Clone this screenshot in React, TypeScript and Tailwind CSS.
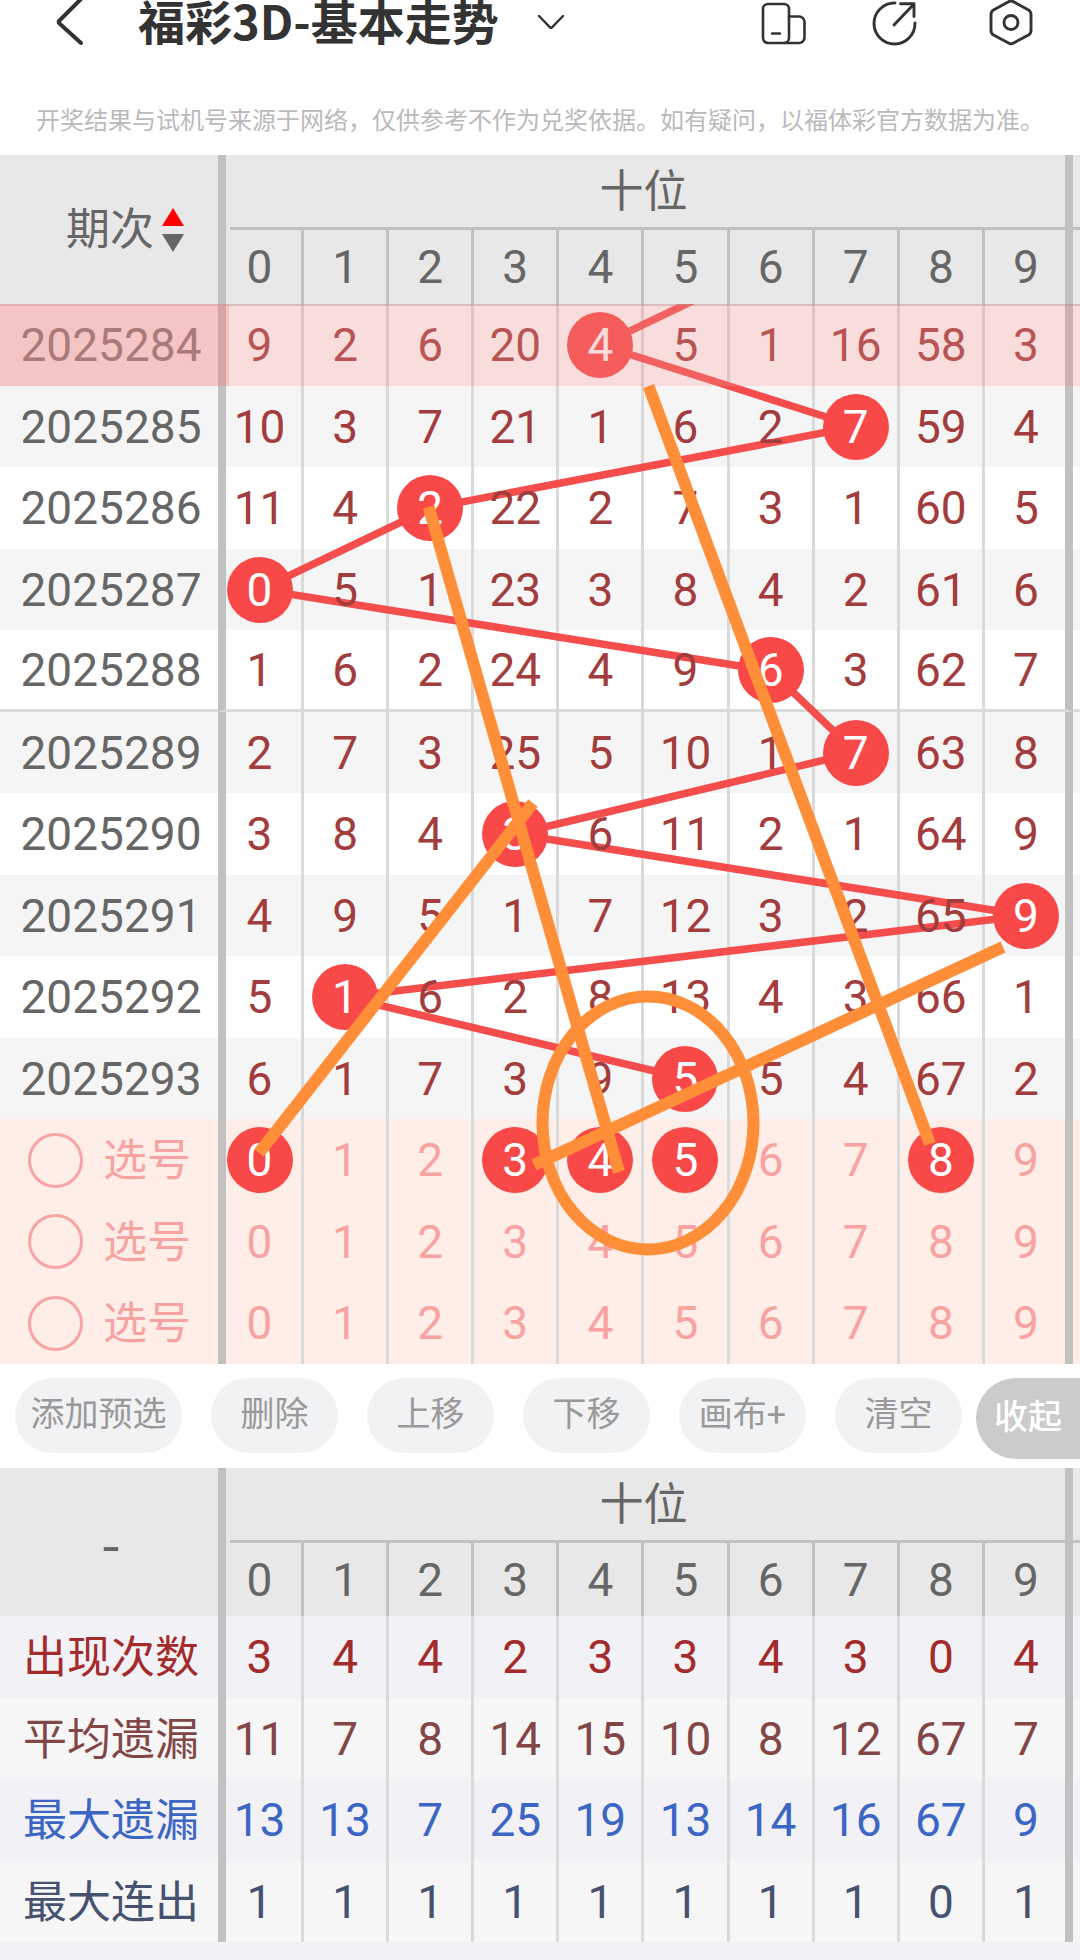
import { useState } from "react";

const DIGITS = [0, 1, 2, 3, 4, 5, 6, 7, 8, 9];

type Draw = { issue: string; values: number[]; hit: number };

const DRAWS: Draw[] = [
  { issue: "2025284", values: [9, 2, 6, 20, 4, 5, 1, 16, 58, 3], hit: 4 },
  { issue: "2025285", values: [10, 3, 7, 21, 1, 6, 2, 7, 59, 4], hit: 7 },
  { issue: "2025286", values: [11, 4, 2, 22, 2, 7, 3, 1, 60, 5], hit: 2 },
  { issue: "2025287", values: [0, 5, 1, 23, 3, 8, 4, 2, 61, 6], hit: 0 },
  { issue: "2025288", values: [1, 6, 2, 24, 4, 9, 6, 3, 62, 7], hit: 6 },
  { issue: "2025289", values: [2, 7, 3, 25, 5, 10, 1, 7, 63, 8], hit: 7 },
  { issue: "2025290", values: [3, 8, 4, 3, 6, 11, 2, 1, 64, 9], hit: 3 },
  { issue: "2025291", values: [4, 9, 5, 1, 7, 12, 3, 2, 65, 9], hit: 9 },
  { issue: "2025292", values: [5, 1, 6, 2, 8, 13, 4, 3, 66, 1], hit: 1 },
  { issue: "2025293", values: [6, 1, 7, 3, 9, 5, 5, 4, 67, 2], hit: 5 },
];

const STATS = [
  { label: "出现次数", values: [3, 4, 4, 2, 3, 3, 4, 3, 0, 4], style: "bg-[#f1f1f6] text-[#a32b2b]" },
  { label: "平均遗漏", values: [11, 7, 8, 14, 15, 10, 8, 12, 67, 7], style: "bg-[#f6f6f6] text-[#824646]" },
  { label: "最大遗漏", values: [13, 13, 7, 25, 19, 13, 14, 16, 67, 9], style: "bg-[#f1f1f6] text-[#3b66c4]" },
  { label: "最大连出", values: [1, 1, 1, 1, 1, 1, 1, 1, 0, 1], style: "bg-[#f6f6f6] text-[#47526f]" },
];

// Centre of a column / row in the trend overlay's own units.
const colX = (c: number) => 260 + c * 85.15;
const rowY = (r: number) => 41 + r * 81.5;

function edge(i: number) {
  if (i === 0) return "border-l-8 border-l-[#c1c1c1] border-r-[3px] pr-2";
  if (i === 9) return "border-r-8 border-r-[#c1c1c1] pl-[2px]";
  return "border-r-[3px]";
}

function Columns() {
  return (
    <colgroup>
      <col className="w-[218px]" />
      {DIGITS.map((d) => (
        <col key={d} className={d === 0 ? "w-[86px]" : d === 9 ? "w-[88px]" : ""} />
      ))}
      <col className="w-[7px]" />
    </colgroup>
  );
}

function TableHead({ corner, tall }: { corner: React.ReactNode; tall?: boolean }) {
  return (
    <thead className="bg-[#e8e8e8] text-[#666]">
      <tr className="h-[75px]">
        <th rowSpan={2} scope="col" className="p-0 pl-1 font-normal">{corner}</th>
        <th colSpan={10} scope="colgroup" className="border-x-8 border-[#c1c1c1] p-0 font-normal">
          <div className="ml-1 flex h-[75px] items-center justify-center border-b-[3px] border-[#c1c1c1] pt-[2px] pr-2 text-[44px] leading-none">
            十位
          </div>
        </th>
        <th className="border-b-[3px] border-[#c1c1c1] p-0" />
      </tr>
      <tr className={tall ? "h-[74px]" : "h-[73px]"}>
        {DIGITS.map((d) => (
          <th key={d} scope="col" className={`${edge(d)} border-[#c1c1c1] p-0 text-[46px] leading-none font-normal`}>
            {d}
          </th>
        ))}
        <th className="p-0" />
      </tr>
    </thead>
  );
}

const ball = "relative z-10 mx-auto flex size-[66px] items-center justify-center rounded-full bg-[#f94848] text-white";

function TrendRow({ draw, index }: { draw: Draw; index: number }) {
  const shade = index % 2 ? "bg-[#f5f5f5]" : "bg-white";
  const rule = index === 4 ? "border-b-[3px] border-b-[#dadada]" : "";
  return (
    <tr className={`relative ${shade} odd:h-[82px] even:h-[81px]`}>
      <th scope="row" className={`${rule} p-0 pl-1 font-normal text-[#666]`}>
        {draw.issue}
        {index === 0 && (
          <>
            <span className="absolute inset-0 z-30 border-t-2 border-[#b98c8c]/40 bg-[#eb8e8e]/30" />
            <span className="absolute inset-y-0 left-0 z-30 w-[229px] bg-[#eb8e8e]/30" />
          </>
        )}
      </th>
      {draw.values.map((v, i) => (
        <td key={i} className={`${edge(i)} ${rule} border-[#dadada] p-0 text-[#a33c3c]`}>
          {draw.hit === i ? <span className={ball}>{v}</span> : <span className="relative z-10">{v}</span>}
        </td>
      ))}
      <td className={`${rule} p-0`} />
    </tr>
  );
}

function PickRow({ row, initial }: { row: number; initial: number[] }) {
  const [picked, setPicked] = useState(initial);
  const toggle = (d: number) =>
    setPicked((p) => (p.includes(d) ? p.filter((x) => x !== d) : [...p, d]));
  return (
    <tr className="bg-[#feeee7] text-[#f8a2a2] odd:h-[82px] even:h-[81px]">
      <th scope="row" className="p-0 font-normal">
        <label className="flex items-center gap-5 pl-7 text-[44px] leading-none">
          <input type="radio" name="pick" value={row} className="size-[55px] shrink-0 appearance-none rounded-full border-[3px] border-[#f7a4a4] checked:bg-[#f7a4a4]" />
          <span className="pt-[2px] whitespace-nowrap">选号</span>
        </label>
      </th>
      {DIGITS.map((d) => (
        <td key={d} className={`${edge(d)} border-[#dadada] p-0`}>
          <button
            type="button"
            aria-pressed={picked.includes(d)}
            onClick={() => toggle(d)}
            className={picked.includes(d) ? ball : "mx-auto flex size-[66px] items-center justify-center"}
          >
            {d}
          </button>
        </td>
      ))}
      <td className="p-0" />
    </tr>
  );
}

function TrendLines() {
  const points = [`${colX(6)},${rowY(-1)}`, ...DRAWS.map((d, i) => `${colX(d.hit)},${rowY(i)}`)].join(" ");
  return (
    <svg aria-hidden="true" viewBox="0 0 1080 1060" preserveAspectRatio="none" className="pointer-events-none absolute inset-x-0 top-[149px] bottom-0 z-0 h-[calc(100%-149px)] w-full">
      <polyline points={points} fill="none" stroke="#f54545" strokeOpacity="0.96" strokeWidth="7.5" />
    </svg>
  );
}

function Sketch() {
  return (
    <svg aria-hidden="true" viewBox="0 0 1080 1060" preserveAspectRatio="none" className="pointer-events-none absolute inset-x-0 top-[149px] bottom-0 z-20 h-[calc(100%-149px)] w-full">
      <g fill="none" stroke="#ff8e39" strokeWidth="12">
        <path d="M648.5 82 930 840" />
        <path d="M428.7 203 619 868" />
        <path d="M533 499 259 849" />
        <path d="M1003 643 534 861" />
        <ellipse cx="648" cy="819" rx="105.5" ry="126.5" />
      </g>
    </svg>
  );
}

function IconButton({ label, children }: { label: string; children: React.ReactNode }) {
  return (
    <button type="button" aria-label={label} className="block h-[46px] w-[46px]">
      <svg viewBox="0 0 46 46" className="size-[46px] overflow-visible" fill="none" stroke="#333" strokeWidth="2.6" strokeLinecap="round" strokeLinejoin="round">
        {children}
      </svg>
    </button>
  );
}

const ACTIONS = ["删除", "上移", "下移", "画布+", "清空"];

export default function App() {
  return (
    <div className="min-h-screen bg-[#f1f1f6] font-[Roboto,'Noto_Sans_CJK_SC',sans-serif]">
      <header className="flex h-[46px] items-center bg-white pr-[46px] pl-[46px] text-[#333]">
        <IconButton label="返回">
          <path d="M35-1 13.500 20.500Q12 22 13.500 23.500L35 43" strokeWidth="4" />
        </IconButton>
        <button type="button" className="ml-[46px] flex items-center gap-[38px]">
          <span className="pb-[6px] font-['Noto_Sans_CJK_SC',sans-serif] text-[47px] leading-[40px] font-bold whitespace-nowrap">福彩3D-基本走势</span>
          <svg viewBox="0 0 28 16" className="h-4 w-7" fill="none" stroke="#333" strokeWidth="2.4" strokeLinecap="round" strokeLinejoin="round">
            <path d="M2 1 13 12.300Q14 13.300 15 12.300L26 1" />
          </svg>
        </button>
        <div className="ml-auto flex gap-[67px]">
          <IconButton label="分屏">
            <rect x="1" y="4" width="26" height="39" rx="5" />
            <path d="M27 16.500h10a5.500 5.500 0 0 1 5.500 5.500v15.500a5.500 5.500 0 0 1-5.500 5.500H23M10 33.500h8" />
          </IconButton>
          <IconButton label="分享">
            <path d="M20 3A20.500 20.500 0 1 0 40 23M19 25 38 5M25.500 3.700h13.500V16.500" strokeWidth="2.9" />
          </IconButton>
          <IconButton label="设置">
            <path d="M20.500 1.800Q23 .1 25.500 1.800L40.500 10Q43 11.500 43 14.500V30.500Q43 33.500 40.500 35L25.500 43Q23 44.700 20.500 43L5.500 35Q3 33.500 3 30.500V14.500Q3 11.500 5.500 10Z" strokeWidth="2.900" />
            <circle cx="23" cy="22.500" r="7" strokeWidth="2.900" />
          </IconButton>
        </div>
      </header>
      <p className="bg-white pt-[55px] pb-[18px] text-center font-['Noto_Sans_CJK_SC',sans-serif] text-[24px] leading-[36px] whitespace-nowrap text-[#bababa]">
        开奖结果与试机号来源于网络，仅供参考不作为兑奖依据。如有疑问，以福体彩官方数据为准。
      </p>

      <main>
        <section className="relative isolate" aria-label="基本走势">
          <table className="w-full table-fixed border-separate border-spacing-0 text-center text-[46px] leading-none">
            <Columns />
            <TableHead
              tall
              corner={
                <button type="button" className="mx-auto flex items-center gap-2 pl-7 text-[44px] leading-none">
                  期次
                  <svg viewBox="0 0 22 44" className="h-11 w-[22px]">
                    <path d="M11 0 22 18H0Z" fill="#f00" />
                    <path d="M11 44 0 26h22Z" fill="#666" />
                  </svg>
                </button>
              }
            />
            <tbody>
              {DRAWS.map((d, i) => (
                <TrendRow key={d.issue} draw={d} index={i} />
              ))}
              <PickRow row={1} initial={[0, 3, 4, 5, 8]} />
              <PickRow row={2} initial={[]} />
              <PickRow row={3} initial={[]} />
            </tbody>
          </table>
          <TrendLines />
          <Sketch />
        </section>

        <nav className="flex h-[104px] items-start gap-[29px] bg-white pt-[14px] pl-[15px] text-[34px] leading-none text-[#999]">
          <button type="button" className="h-[75px] w-[167px] rounded-full bg-[#f1f2f4] pb-1 whitespace-nowrap">添加预选</button>
          {ACTIONS.map((a) => (
            <button key={a} type="button" className="h-[75px] w-[127px] rounded-full bg-[#f1f2f4] pb-1 whitespace-nowrap">{a}</button>
          ))}
          <button type="button" className="-ml-[15px] h-[81px] flex-1 rounded-l-full bg-[#cbcbcb] pb-1 font-medium whitespace-nowrap text-white">收起</button>
        </nav>

        <table className="w-full table-fixed border-separate border-spacing-0 text-center text-[46px] leading-none" aria-label="统计">
          <Columns />
          <TableHead corner={<span className="font-['Noto_Sans_CJK_SC',sans-serif] text-[56px]">-</span>} />
          <tbody>
            {STATS.map((s) => (
              <tr key={s.label} className={`${s.style} odd:h-[82px] even:h-[81px]`}>
                <th scope="row" className="p-0 pt-[2px] pl-1 text-[44px] font-normal">{s.label}</th>
                {s.values.map((v, i) => (
                  <td key={i} className={`${edge(i)} border-[#dadada] p-0`}>{v}</td>
                ))}
                <td className="p-0" />
              </tr>
            ))}
          </tbody>
        </table>
      </main>
    </div>
  );
}
